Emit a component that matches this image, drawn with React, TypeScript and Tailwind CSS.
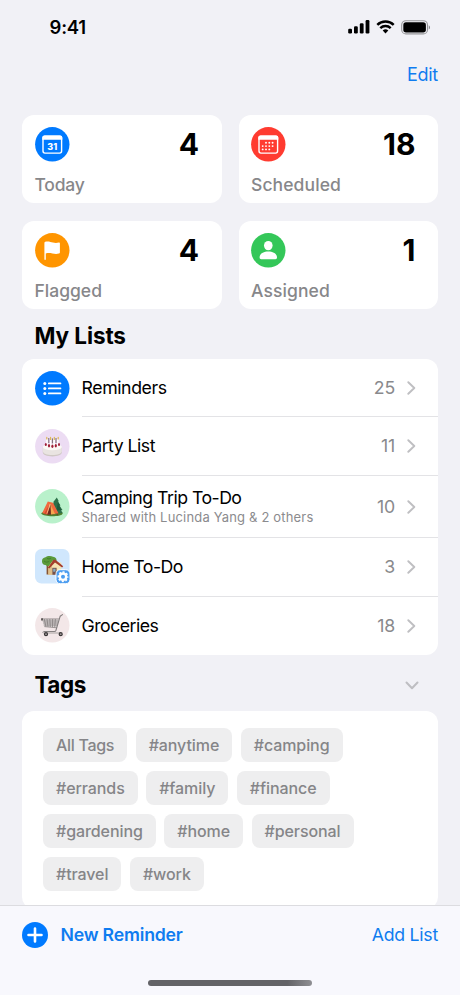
import type { ReactNode } from "react";

type SummaryCardProps = {
  icon: ReactNode;
  label: string;
  labelClass: string;
  count: number;
};

type ListItem = {
  name: string;
  nameClass: string;
  note?: string;
  count: number;
  icon: ReactNode;
  rowClass: string;
};

const SignalIcon = () => (
  <svg width="22" height="14" viewBox="0 0 22 14" fill="#000">
    <rect x="0.2" y="8.8" width="3.8" height="4.7" rx="1.2" />
    <rect x="6" y="6.2" width="3.8" height="7.3" rx="1.2" />
    <rect x="11.8" y="3.2" width="3.8" height="10.3" rx="1.2" />
    <rect x="17.6" y="0" width="3.8" height="13.5" rx="1.2" />
  </svg>
);

const WifiIcon = () => (
  <svg width="19" height="14" viewBox="0 0 19 14" fill="none" stroke="#000">
    <path d="M1.3 4.9a11.8 11.8 0 0 1 16.4 0" strokeWidth="2.5" />
    <path d="M4.3 8.1a7.4 7.4 0 0 1 10.4 0" strokeWidth="2.4" />
    <path d="M9.5 13.4 6.7 10.5a4.1 4.1 0 0 1 5.6 0Z" fill="#000" stroke="none" />
  </svg>
);

const BatteryIcon = () => (
  <svg width="30" height="15" viewBox="0 0 30 15">
    <rect x="0.7" y="0.7" width="25.8" height="13.2" rx="4.2" fill="none" stroke="#000" strokeOpacity="0.38" strokeWidth="1.1" />
    <rect x="2.3" y="2.2" width="22.6" height="10.2" rx="2.7" />
    <path d="M27.8 5.2v4.4c1.6-.7 1.6-3.7 0-4.4Z" fillOpacity="0.45" />
  </svg>
);

const TodayIcon = () => (
  <svg width="35" height="35" viewBox="0 0 35 35">
    <circle cx="17.3" cy="17.3" r="17.2" fill="#007aff" />
    <rect x="8" y="9.1" width="18.6" height="17" rx="2" fill="none" stroke="#fff" strokeWidth="1.4" />
    <path d="M7.3 10.4a2 2 0 0 1 2-2h16a2 2 0 0 1 2 2v2.4h-20Z" fill="#fff" />
    <text x="17.3" y="22.6" textAnchor="middle" fill="#fff" fontSize="9" fontWeight="800" fontFamily="Inter, sans-serif">
      31
    </text>
  </svg>
);

const calendarDots = [
  [15, 15.8], [18.3, 15.8], [21.6, 15.8],
  [11.7, 19.1], [15, 19.1], [18.3, 19.1], [21.6, 19.1],
  [11.7, 22.4], [15, 22.4], [18.3, 22.4],
];

const ScheduledIcon = () => (
  <svg width="35" height="35" viewBox="0 0 35 35">
    <circle cx="17.3" cy="17.3" r="17.2" fill="#ff3b30" />
    <rect x="8" y="9.1" width="18.6" height="17" rx="2" fill="none" stroke="#fff" strokeWidth="1.4" />
    <path d="M7.3 10.4a2 2 0 0 1 2-2h16a2 2 0 0 1 2 2v2.4h-20Z" fill="#fff" />
    {calendarDots.map(([x, y]) => (
      <circle key={`${x}-${y}`} cx={x} cy={y} r="0.95" fill="#fff" />
    ))}
  </svg>
);

const FlaggedIcon = () => (
  <svg width="35" height="35" viewBox="0 0 35 35">
    <circle cx="17.3" cy="17.3" r="17.2" fill="#ff9500" />
    <path
      d="M9.4 9.8c0-.5.3-.8.8-1 3.3-.9 5.200.2 7.700.8 2 .5 4 .5 6 0 .6-.2 1 .1 1 .7v9.200c0 .6-.4.9-1 1.100-2.200.6-4.300.4-6.500-.1-2.300-.5-4.400-.7-6.600 0v5.700c0 .5-.3.8-.7.8s-.7-.3-.7-.8Z"
      fill="#fff"
    />
  </svg>
);

const AssignedIcon = () => (
  <svg width="35" height="35" viewBox="0 0 35 35">
    <circle cx="17.3" cy="17.3" r="17.2" fill="#34c759" />
    <ellipse cx="17.3" cy="12.6" rx="4.3" ry="4.7" fill="#fff" />
    <path d="M8.600 24.500c0-3.400 3.600-5.900 8.700-5.900s8.700 2.500 8.700 5.900c0 1.200-.6 1.700-1.600 1.700H10.200c-1 0-1.600-.5-1.600-1.700Z" fill="#fff" />
  </svg>
);

const BulletListIcon = () => (
  <svg width="35" height="35" viewBox="0 0 35 35" fill="#fff">
    <circle cx="17.3" cy="17.3" r="17.2" fill="#007aff" />
    <circle cx="9.8" cy="12.4" r="1.5" />
    <circle cx="9.8" cy="17.4" r="1.5" />
    <circle cx="9.8" cy="22.4" r="1.5" />
    <path d="M13.8 12.400h11.700M13.8 17.400h11.700M13.8 22.400h11.700" stroke="#fff" strokeWidth="1.7" strokeLinecap="round" />
  </svg>
);

const CakeIcon = () => (
  <svg width="35" height="35" viewBox="0 0 35 35">
    <circle cx="17.3" cy="17.3" r="17.2" fill="#ecdcf3" />
    <path d="M7.8 18.200v5.300c0 2.300 4.200 3.900 9.500 3.900s9.500-1.600 9.500-3.900v-5.300Z" fill="#cfc8c4" />
    <path d="M7.8 18v4.200c0 2.300 4.200 3.800 9.500 3.800s9.500-1.500 9.500-3.800V18Z" fill="#e9e4e1" />
    <ellipse cx="17.3" cy="18" rx="9.500" ry="3.300" fill="#fbf9f6" />
    <path d="M12 10.200v5M15.600 10.800v5M19.200 10.800v5M22.800 10.200v5" stroke="#fff" strokeWidth="1.5" />
    <path d="M13.800 9v5M17.400 9.400v5M21 9v5" stroke="#77666a" strokeWidth="1" />
    <path d="M11.800 8.200v1.800M15.600 8.400v2M19.300 8.400v2M23.200 8.200v1.800" stroke="#dcb64a" strokeWidth="1.1" strokeLinecap="round" />
    <g fill="#9f1e37">
      <ellipse cx="10.800" cy="15.400" rx="1" ry="1.500" />
      <ellipse cx="14" cy="16.800" rx="1.100" ry="1.700" />
      <ellipse cx="17.400" cy="17.200" rx="1.100" ry="1.800" />
      <ellipse cx="20.800" cy="16.800" rx="1.100" ry="1.700" />
      <ellipse cx="24" cy="15.400" rx="1" ry="1.500" />
    </g>
  </svg>
);

const TentIcon = () => (
  <svg width="35" height="35" viewBox="0 0 35 35">
    <circle cx="17.3" cy="17.3" r="17.2" fill="#b9f1cb" />
    <path d="M6.2 24.500c1.500-2.300 5-2.500 11-2.500s10.300.8 10.600 2.500c-1.200 2.300-5.500 2.700-10.600 2.700s-9.500-.7-11-2.700Z" fill="#4f7f2e" />
    <path d="M22.300 23v3" stroke="#6b4526" strokeWidth="1.4" />
    <path d="m21.800 8.500 2 3.800-.8.100 2.500 4-1 .1 3 4.600-1.500.3 1.800 2.300c-3 1-6.500 1-9.500 0L16.800 17l2-3.600-.7-.1Z" fill="#2d7049" />
    <path d="m23 13 2 3.500-1 .1 2.500 4.500-5 .5Z" fill="#1e5b3c" />
    <path d="m12.800 12.400 5.200 1.400 5.500 10.500-4.800.8-3.200-9.800-6 9.500-2.300-.9Z" fill="#f0693e" />
    <path d="m14.600 15.200-5.600 9.700 4.300.9Z" fill="#d9472d" />
    <path d="m15.400 15-3.200 10.700 6.700-.5Z" fill="#6d2b20" />
    <path d="m15.400 15 .6 10.400 4-.3Z" fill="#f5a64e" />
    <path d="m15.100 15-3.200 9.700" stroke="#ffd08a" strokeWidth="0.8" />
  </svg>
);

const HouseIcon = () => (
  <svg width="36" height="36" viewBox="0 0 36 36">
    <rect width="34.5" height="34.5" rx="6.5" fill="#d0e7fd" />
    <path d="M12.7 16v9.500" stroke="#855331" strokeWidth="2.2" />
    <path d="M7 12.500c-.3-2.500 1.500-4 3.500-4.200C12 6.700 16 6.400 18 7.800c2.500.2 4.300 2.400 3.300 4.600-.3 2.500-2.500 3.800-5 3.500-2 1.700-4.500 1.500-5.800.2-2 .1-3.600-1.700-3.500-3.600Z" fill="#5a9a3b" />
    <path d="M9 12c1.500 1.500 4 1.400 5.300.2M12 9.300c1 .8 3 .8 4-.2" stroke="#3f7c2e" strokeWidth="0.9" fill="none" />
    <path d="M13.800 17.500 17 13l9.300.4v11.800l-12.500.6Z" fill="#f5e3b3" />
    <path d="m18.200 11-5 6.800v8l3.800.3v-9Z" fill="#dfbe88" />
    <path d="m20.500 10.700 7.700 6.600-1.100 1.300-7.100-5.200-5.700 6-1.400-.7 5.600-8Z" fill="#a53d2c" />
    <path d="M17.300 18.800h4.300v7h-4.300Z" fill="#765049" />
    <path d="M18.200 19.700h2.300v3h-2.300Z" fill="#89acc2" />
    <rect x="21" y="20.7" width="14" height="14" rx="4.2" fill="#4c9df0" stroke="#fff" strokeWidth="1" />
    <circle cx="28" cy="27.7" r="3.2" fill="none" stroke="#fff" strokeWidth="2.4" />
    <circle cx="28" cy="27.7" r="4.7" fill="none" stroke="#fff" strokeWidth="1.5" strokeDasharray="2 1.69" strokeDashoffset="1" />
  </svg>
);

const CartIcon = () => (
  <svg width="35" height="35" viewBox="0 0 35 35" fill="none">
    <circle cx="17.3" cy="17.3" r="17.2" fill="#f3e7e8" />
    <path d="M7.300 11h16.400l-2 8.400-12.400-1Z" fill="#dbd5d5" />
    <path d="M7.200 10.900h16.700M7.700 13h15.700M8.200 15h14.800M8.700 17h13.800M9.300 18.600l12.600 1.200M9.300 11l1.600 7.600M12 11l1 7.800M14.800 11l.5 8M17.600 11l-.1 8.200M20.400 11l-.7 8.400" stroke="#7d7777" strokeWidth="0.7" />
    <path d="m27.500 6.600-2.300 1.600-4.300 14.300c-.3.800-.8 1-1.500 1H9.100" stroke="#858080" strokeWidth="1.1" strokeLinecap="round" />
    <path d="M9 23.500c-1.400 0-1.700.8-.7 1.500h17" stroke="#a29b9b" strokeWidth="0.9" />
    <path d="M7 10.200v2.400" stroke="#343030" strokeWidth="1.5" />
    <circle cx="11" cy="26.200" r="1.5" fill="#a19999" stroke="#393536" strokeWidth="1.2" />
    <circle cx="25.700" cy="26.200" r="1.5" fill="#a19999" stroke="#393536" strokeWidth="1.2" />
  </svg>
);

const ChevronRight = () => (
  <svg width="9" height="14" viewBox="0 0 9 14" fill="none" className="shrink-0">
    <path d="m1.300 1.200 6 5.800-6 5.800" stroke="#bfbfc2" strokeWidth="1.9" strokeLinecap="round" strokeLinejoin="round" />
  </svg>
);

const lists: ListItem[] = [
  { name: "Reminders", nameClass: "tracking-[-0.4px]", count: 25, icon: <BulletListIcon />, rowClass: "h-[58px]" },
  { name: "Party List", nameClass: "tracking-[-0.52px]", count: 11, icon: <CakeIcon />, rowClass: "h-[58.5px]" },
  {
    name: "Camping Trip To-Do",
    nameClass: "tracking-[-0.52px]",
    note: "Shared with Lucinda Yang & 2 others",
    count: 10,
    icon: <TentIcon />,
    rowClass: "h-[62.5px]",
  },
  { name: "Home To-Do", nameClass: "tracking-[-0.54px]", count: 3, icon: <HouseIcon />, rowClass: "h-[58.5px]" },
  { name: "Groceries", nameClass: "tracking-[-0.5px]", count: 18, icon: <CartIcon />, rowClass: "h-[58px]" },
];

const tagRows = [
  ["All Tags", "#anytime", "#camping"],
  ["#errands", "#family", "#finance"],
  ["#gardening", "#home", "#personal"],
  ["#travel", "#work"],
];

const SummaryCard = ({ icon, label, labelClass, count }: SummaryCardProps) => (
  <div className="h-[88px] rounded-xl bg-white pt-3 pr-[22.5px] pl-[12.5px]">
    <div className="flex h-[35px] items-center justify-between">
      {icon}
      <span className="text-[30px] leading-[35px] font-bold">{count}</span>
    </div>
    <div className={`mt-[11px] text-[17.5px] leading-[23px] font-medium text-[#87878a] ${labelClass}`}>{label}</div>
  </div>
);

const App = () => {
  return (
    <div className="flex h-[995px] w-[460px] flex-col overflow-hidden bg-[#f1f1f6] font-['Inter',sans-serif] text-black">
      <div className="flex h-[54px] shrink-0 items-center justify-between pr-[29px] pl-[49.5px]">
        <span className="text-[18.5px] leading-[22px] font-semibold tracking-[-0.2px]">9:41</span>
        <div className="flex items-center gap-[6px]">
          <SignalIcon />
          <WifiIcon />
          <BatteryIcon />
        </div>
      </div>
      <div className="flex h-[61px] shrink-0 justify-end pt-[9px] pr-[22px]">
        <span className="text-[18px] leading-[24px] tracking-[-0.25px] text-[#0f7cf0]">Edit</span>
      </div>

      <main className="min-h-0 flex-1 overflow-hidden px-[22px]">
        <div className="grid grid-cols-2 gap-x-[17px] gap-y-[17.5px]">
          <SummaryCard icon={<TodayIcon />} label="Today" labelClass="tracking-[-0.2px]" count={4} />
          <SummaryCard icon={<ScheduledIcon />} label="Scheduled" labelClass="tracking-[0.1px]" count={18} />
          <SummaryCard icon={<FlaggedIcon />} label="Flagged" labelClass="tracking-[0px]" count={4} />
          <SummaryCard icon={<AssignedIcon />} label="Assigned" labelClass="tracking-[0.1px]" count={1} />
        </div>

        <h2 className="flex h-[50.5px] items-center pt-[5px] pl-[12.5px] text-[22.5px] leading-7 font-bold tracking-[-0.1px]">
          My Lists
        </h2>
        <div className="h-[296px] rounded-xl bg-white pl-[12.5px]">
          {lists.map((list, index) => (
            <div key={list.name} className={`flex items-center ${list.rowClass}`}>
              <div className="w-[47px] shrink-0">{list.icon}</div>
              <div
                className={`flex h-full flex-1 items-center pt-px pr-[22px] ${
                  index < lists.length - 1 ? "border-b border-[#e3e3e6]" : ""
                }`}
              >
                <div className="flex-1">
                  <div className={`text-[17.7px] leading-[20px] ${list.nameClass}`}>{list.name}</div>
                  {list.note && (
                    <div className="text-[13px] leading-[18px] tracking-[0.17px] text-[#8b8b8e]">{list.note}</div>
                  )}
                </div>
                <span className="mr-[12px] text-[17.7px] leading-[22px] tracking-[-0.2px] text-[#89898c]">{list.count}</span>
                <ChevronRight />
              </div>
            </div>
          ))}
        </div>

        <div className="flex h-14 items-center justify-between pt-1 pr-[19px] pl-[12.5px]">
          <h2 className="text-[22.5px] leading-7 font-bold tracking-[-0.5px]">Tags</h2>
          <svg width="14" height="9" viewBox="0 0 14 9" fill="none">
            <path d="m1.500 1.500 5.500 5.800 5.500-5.800" stroke="#bebec2" strokeWidth="2" strokeLinecap="round" strokeLinejoin="round" />
          </svg>
        </div>
        <div className="h-[198px] rounded-xl bg-white px-[21px] pt-[17px]">
          <div className="flex flex-col gap-[9px]">
            {tagRows.map((row) => (
              <div key={row[0]} className="flex gap-[8.5px]">
                {row.map((tag) => (
                  <span
                    key={tag}
                    className={`h-[34px] rounded-[8px] bg-[#eeeeef] px-[13px] text-[16px] leading-[34px] font-medium text-[#858588] ${
                      tag === "All Tags" ? "tracking-[-0.3px]" : "tracking-[-0.08px]"
                    }`}
                  >
                    {tag}
                  </span>
                ))}
              </div>
            ))}
          </div>
        </div>
      </main>

      <footer className="h-[90px] shrink-0 border-t border-[#dcdce0] bg-[#f8f8fd] text-[#0f7cf0]">
        <div className="flex h-[58px] items-center justify-between px-[22px]">
          <div className="flex items-center gap-[12.5px]">
            <svg width="26" height="26" viewBox="0 0 26 26">
              <circle cx="13" cy="13" r="13" fill="#007aff" />
              <path d="M13 6.500v13M6.500 13h13" stroke="#fff" strokeWidth="2.6" strokeLinecap="round" />
            </svg>
            <span className="text-[17.7px] leading-[22px] font-semibold tracking-[-0.2px]">New Reminder</span>
          </div>
          <span className="text-[17.7px] leading-[22px] tracking-[-0.25px]">Add List</span>
        </div>
        <div className="mx-auto mt-4 h-[6px] w-[164px] rounded-full bg-linear-to-r from-[#636367] from-85% to-[#8f8f93]" />
      </footer>
    </div>
  );
};

export default App;
